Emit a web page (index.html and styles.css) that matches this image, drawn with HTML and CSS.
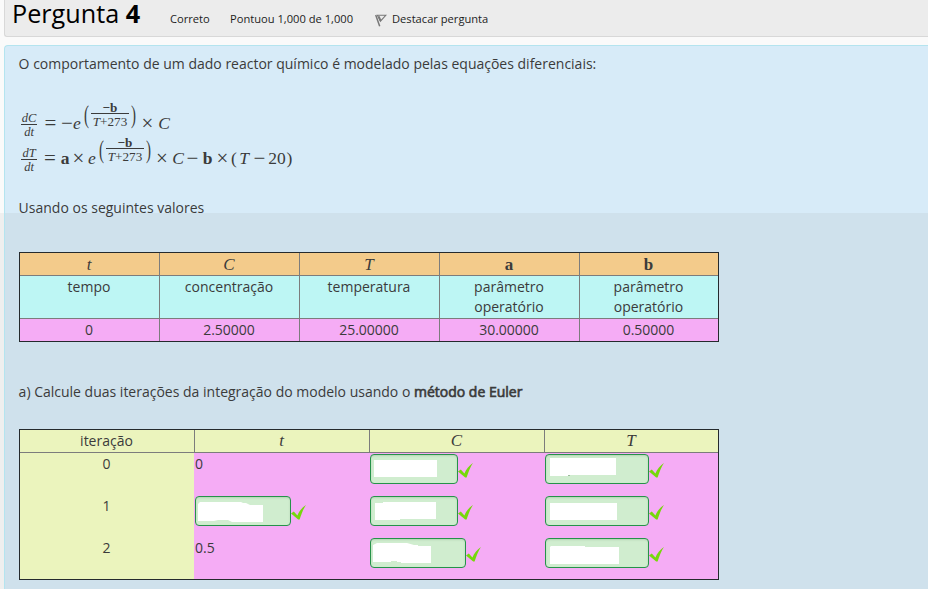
FILE: index.html
```
<!DOCTYPE html>
<html lang="pt">
<head>
<meta charset="utf-8">
<title>Pergunta 4</title>
<link rel="stylesheet" href="styles.css">
</head>
<body>
<svg width="0" height="0" class="defs"><symbol id="check" viewBox="0 0 15 16"><path d="M0 9.4 2.8 7.6 6.4 11.4C8 7.4 11 3.6 14.9.9 12.5 4.6 10.4 10 8.6 15.4L7.2 15.4Z" fill="#76d80b"/></symbol></svg>
<header class="info">
  <h1>Pergunta <b>4</b></h1>
  <span class="state">Correto</span>
  <span class="grade">Pontuou 1,000 de 1,000</span>
  <span class="flag"><svg width="12" height="13" viewBox="0 0 12 13" fill="none" stroke="#777"><path d="M.7 1 4.7 12.3" stroke-width="1.5"/><path d="M2.4 1.3H10.8L5.4 7.2Z" stroke-width="1.1"/><path d="M3.8 2.3 5.5 6.4" stroke-width="1.7"/></svg>Destacar pergunta</span>
</header>
<main class="question">
  <p class="intro">O comportamento de um dado reactor químico é modelado pelas equações diferenciais:</p>
  <div class="equations">
    <div class="eq first">
      <span class="ratio"><i>dC</i><i>dt</i></span><span class="op">=</span><span class="op">−</span><i>e</i>
      <span class="power"><span class="paren">(</span><span class="expo"><b>−b</b><span><i>T</i>+273</span></span><span class="paren">)</span></span>
      <span class="op">×</span><i>C</i>
    </div>
    <div class="eq second">
      <span class="ratio"><i>dT</i><i>dt</i></span><span class="op">=</span><b>a</b><span class="op">×</span><i>e</i>
      <span class="power"><span class="paren">(</span><span class="expo"><b>−b</b><span><i>T</i>+273</span></span><span class="paren">)</span></span>
      <span class="op">×</span><i>C</i><span class="op">−</span><b>b</b><span class="op">×</span><span>(</span><i>T</i><span class="op">−</span><span>20</span><span>)</span>
    </div>
  </div>
  <p class="values-intro">Usando os seguintes valores</p>
  <div class="values">
    <div class="m"><i>t</i></div><div class="m"><i>C</i></div><div class="m"><i>T</i></div><div class="m"><b>a</b></div><div class="m"><b>b</b></div>
    <div class="label">tempo</div><div class="label">concentração</div><div class="label">temperatura</div><div class="label">parâmetro<br>operatório</div><div class="label">parâmetro<br>operatório</div>
    <div class="num">0</div><div class="num">2.50000</div><div class="num">25.00000</div><div class="num">30.00000</div><div class="num">0.50000</div>
  </div>
  <p class="task">a) Calcule duas iterações da integração do modelo usando o <strong>método de Euler</strong></p>
  <div class="answers">
    <div class="head">iteração</div><div class="head m"><i>t</i></div><div class="head m"><i>C</i></div><div class="head m"><i>T</i></div>
    <div class="step">0</div>
    <div class="cell">0</div>
    <div class="cell"><span class="field short"><svg width="86" height="28"><path d="M3 5H66V22H3Z"/></svg></span><svg class="ok"><use href="#check"/></svg></div>
    <div class="cell"><span class="field long"><svg width="102" height="28"><path d="M4 3H70V20H24V21H4Z"/><path class="trace" d="M22 20H24V21H22Z"/></svg></span><svg class="ok"><use href="#check"/></svg></div>
    <div class="step">1</div>
    <div class="cell"><span class="field mid"><svg width="94" height="28"><path d="M2 7 4 5H45L47 6H50L54 8H67V25H36L32 23H22L18 24H2Z"/></svg></span><svg class="ok"><use href="#check"/></svg></div>
    <div class="cell"><span class="field short"><svg width="86" height="28"><path d="M4 6H12V5H65V22H29V23H4Z"/></svg></span><svg class="ok"><use href="#check"/></svg></div>
    <div class="cell"><span class="field long"><svg width="102" height="28"><path d="M4 6H71V23H4Z"/></svg></span><svg class="ok"><use href="#check"/></svg></div>
    <div class="step">2</div>
    <div class="cell">0.5</div>
    <div class="cell"><span class="field mid"><svg width="94" height="28"><path d="M2 6 6 4H36L43 6H47V7H60V24H30V23H26V22H20V23H2Z"/></svg></span><svg class="ok"><use href="#check"/></svg></div>
    <div class="cell"><span class="field long"><svg width="102" height="28"><path d="M4 8 5 7H39V8H73V25H4Z"/></svg></span><svg class="ok"><use href="#check"/></svg></div>
  </div>
</main>
</body>
</html>
```
FILE: styles.css
```
* { box-sizing: border-box; }
html { height: 589px; overflow: hidden; background: linear-gradient(#fafafa 213px, #efefef 213px); }
body { margin: 0; padding-left: 4px; height: 589px; overflow: hidden; font: 14px/20px "Open Sans", sans-serif; color: #3b3b3b; }
p, h1 { margin: 0; }
.defs { display: block; height: 0; }
.info { height: 37px; border: 1px solid #d8d8d8; border-width: 0 0 1px 1px; border-radius: 0 0 0 3px; background: #ececec; display: flex; font-size: 11.15px; color: #1c1c1c; }
h1 { font-size: 25.2px; line-height: 27px; font-weight: 400; color: #000; width: 165px; padding-left: 7px; white-space: nowrap; }
.state, .grade, .flag { line-height: 20px; padding-top: 9px; white-space: nowrap; }
.state { width: 60px; }
.grade { width: 145px; }
.flag { display: flex; gap: 5px; }
.flag svg { margin-top: 5px; }
.question { margin-top: 8px; height: 544px; border: 1px solid #b4e4ef; border-width: 1px 0 0 1px; border-radius: 4px 0 0 0; padding: 8px 0 0 14px; background: linear-gradient(#d7ebf8 167px, #cfe1ec 167px); }
.question > p { text-indent: -.4px; }
.equations { margin-top: 30px; font: 17.5px/20px "Liberation Serif", serif; }
.eq { height: 35px; display: grid; justify-items: center; }
.eq > * { margin-top: 9px; }
.first { grid-template-columns: 20px 23px 10px 10px 57px 17px 16px; }
.second { grid-template-columns: 20px 22px 8px 19px 8px 57px 18px 14px 15px 15px 15px 8px 12px 19px 16px 9px; }
.op { font-size: 21px; }
.eq > .ratio { display: flex; flex-direction: column; justify-self: start; margin: 8px 0 0 2px; width: 16px; font-size: 12.5px; line-height: 13px; text-align: center; }
.ratio i:first-child { border-bottom: 1px solid #3b3b3b; height: 13px; line-height: 12px; }
.ratio i:last-child { line-height: 15px; }
.eq > .power { display: flex; justify-self: start; margin: -3px 0 0; height: 28px; }
.second > .power { padding-left: 1px; }
.expo { width: 38px; font-size: 13.2px; line-height: 17px; text-align: center; display: flex; flex-direction: column; white-space: nowrap; }
.expo b { border-bottom: 1px solid #3b3b3b; height: 13px; line-height: 14px; }
.expo span { line-height: 15px; }
.paren { width: 9px; font-size: 15px; line-height: 28px; text-align: center; transform: scaleY(1.65); }
.values-intro { margin-top: 24px; }
.m { font-family: "Liberation Serif", serif; font-size: 17px; }
.values { margin-top: 34px; width: 700px; height: 90px; border: 1px solid #252a2d; display: grid; grid-template: 23px 43px 22px / repeat(4, 140px) 138px; text-align: center; }
.values > div { border: 1px solid #7c7c7c; border-width: 0 1px 1px 0; padding: 1px 1px 0 0; }
.values > div:nth-child(5n) { border-right: 0; }
.values > .num { border-bottom: 0; background: #f5acf5; }
.values .m { background: #f3cb8b; padding-top: 2px; }
.values > .label { background: #bdf6f4; }
.task { margin-top: 40px; }
strong { font-weight: 400; -webkit-text-stroke: .65px #3b3b3b; }
.answers { margin-top: 27px; width: 700px; height: 151px; border: 1px solid #252a2d; display: grid; grid-template: 23px 42px 42px 42px / 174px 175px 175px 174px; background: #f5acf5; }
.head { background: #ebf4bd; border: 1px solid #7c7c7c; border-width: 0 0 1px 1px; text-align: center; padding: 1px 1px 0 0; }
.head:first-child { border-left: 0; }
.step { background: #ebf4bd; text-align: center; padding: 1px 1px 0 0; }
.cell { display: flex; align-items: flex-start; padding: 1px 0 0 1px; }
.field { height: 30px; border: 1px solid #26924a; border-radius: 4px; background: #d0edcf; box-shadow: inset 0 1px 2px #8daf8d66; }
.field svg { display: block; fill: #fff; }
.field .trace { fill: #9bbd9b; }
.short { width: 88px; }
.mid { width: 96px; }
.long { width: 104px; }
.ok { width: 15px; height: 16px; margin-top: 8px; }
```
